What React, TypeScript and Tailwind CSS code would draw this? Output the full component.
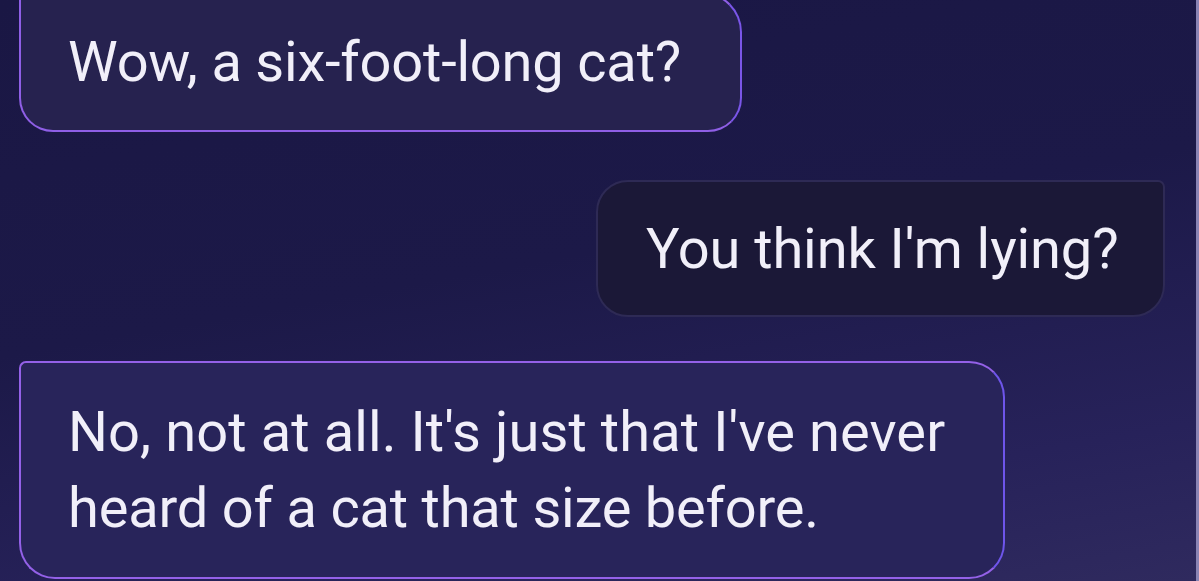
import React from "react";

export default function App() {
  return (
    <div
      className="relative h-[581px] w-[1199px] overflow-hidden bg-[linear-gradient(170deg,#1a1744_0%,#1c1948_45%,#27225a_80%,#2f2a5e_100%)]"
      style={{ fontFamily: "Roboto, 'Noto Sans', sans-serif" }}
    >
      <div className="flex flex-col pl-[19px] pr-[34px] text-[#f1eff9]">
        <div className="mt-[-8px] flex h-[140px] w-[723px] items-center rounded-[34px] rounded-tl-[8px] rounded-tr-[40px] border-[2.5px] border-[#8f5fe6] border-r-[#7a56e8] bg-[#26224f] pl-[47px]">
          <span className="text-[56px] leading-none tracking-[-0.2px]">Wow, a six-foot-long cat?</span>
        </div>
        <div className="mt-[48px] flex h-[137px] w-[569px] items-center self-end rounded-[32px] rounded-tr-[7px] border-2 border-[#2e2a55] bg-[#1b1837] pl-[48px]">
          <span className="text-[56px] leading-none tracking-[-0.1px]">You think I'm lying?</span>
        </div>
        <div className="mt-[44px] flex h-[218px] w-[986px] flex-col justify-center rounded-[36px] rounded-tl-[7px] border-[2.5px] border-[#9461e8] border-r-[#6e55ea] bg-[#28245a] pl-[47px]">
          <p className="text-[56px] leading-[76px]">
            <span className="tracking-[0.1px]">No, not at all. It's just that I've never</span>
            <br />
            <span className="tracking-[-0.2px]">heard of a cat that size before.</span>
          </p>
        </div>
      </div>
      <div className="absolute right-0 top-0 h-full w-[3px] bg-[#8a84b4]" />
    </div>
  );
}
